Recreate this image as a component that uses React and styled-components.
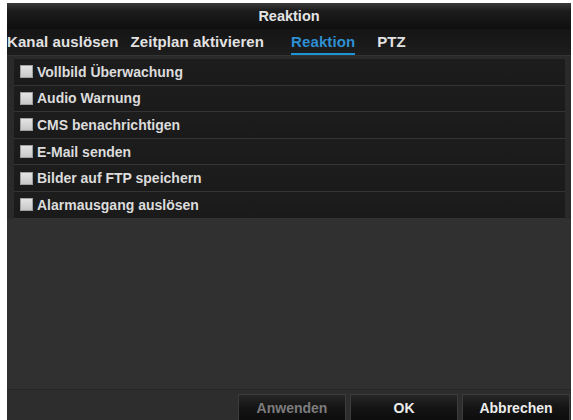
import React from 'react';
import styled, { createGlobalStyle } from 'styled-components';

const GlobalStyle = createGlobalStyle`
  html, body {
    margin: 0;
    padding: 0;
    background: #ffffff;
  }
  body {
    font-family: 'Liberation Sans', Arial, sans-serif;
  }
`;

const tabs = ['Kanal auslösen', 'Zeitplan aktivieren', 'Reaktion', 'PTZ'];

const actions = [
  'Vollbild Überwachung',
  'Audio Warnung',
  'CMS benachrichtigen',
  'E-Mail senden',
  'Bilder auf FTP speichern',
  'Alarmausgang auslösen',
];

const App = () => {
  return (
    <Frame>
      <GlobalStyle />
      <Panel>
        <TitleBar>Reaktion</TitleBar>
        <TabBar>
          {tabs.map((tab) => (
            <Tab key={tab} active={tab === 'Reaktion'}>
              {tab}
            </Tab>
          ))}
        </TabBar>
        <Content>
          <List>
            {actions.map((label) => (
              <Row key={label}>
                <Check />
                <span>{label}</span>
              </Row>
            ))}
          </List>
          <Filler />
        </Content>
        <Footer>
          <Button disabled>Anwenden</Button>
          <Button>OK</Button>
          <Button>Abbrechen</Button>
        </Footer>
      </Panel>
    </Frame>
  );
};

const Frame = styled.div`
  box-sizing: border-box;
  width: 573px;
  height: 420px;
  padding: 3px 2px 0 7px;
  overflow: hidden;
`;

const Panel = styled.div`
  display: flex;
  flex-direction: column;
  height: 100%;
  background-color: #2c2c2c;
`;

const TitleBar = styled.div`
  height: 26px;
  display: flex;
  align-items: center;
  justify-content: center;
  background: linear-gradient(to bottom, #3a3a3a 0%, #1c1c1c 30%, #0f0f0f 100%);
  color: #e4e4e4;
  font-size: 14.5px;
  font-weight: bold;
`;

const TabBar = styled.div`
  height: 26px;
  display: flex;
  align-items: center;
  gap: 12px;
  background: linear-gradient(to bottom, #151515 0%, #1d1d1d 100%);
  border-bottom: 1px solid #333333;
`;

const Tab = styled.div`
  position: relative;
  top: 1px;
  font-size: 15px;
  font-weight: bold;
  line-height: 22px;
  letter-spacing: 0.1px;
  color: ${(props) => (props.active ? '#2e8fd2' : '#e2e2e2')};
  border-bottom: 2px solid ${(props) => (props.active ? '#1a96d8' : 'transparent')};
  margin-left: ${(props) => (props.active ? '15px' : '0')};
  margin-right: ${(props) => (props.active ? '10px' : '0')};
`;

const Content = styled.div`
  flex: 1;
  display: flex;
  flex-direction: column;
  padding: 3px 6px 0 7px;
  background-color: #2a2a2a;
`;

const List = styled.div`
  display: flex;
  flex-direction: column;
`;

const Row = styled.div`
  height: 25.6px;
  display: flex;
  align-items: center;
  gap: 4px;
  padding-left: 6px;
  background: linear-gradient(to bottom, #1d1d1d 0%, #1a1a1a 100%);
  border-bottom: 1px solid #343434;
  color: #dcdcdc;
  font-size: 14px;
  font-weight: bold;
`;

const Check = styled.div`
  width: 13px;
  height: 13px;
  background: linear-gradient(to bottom, #e4e4e4 0%, #c8c8c8 100%);
  border: 1px solid #a0a0a0;
  box-sizing: border-box;
`;

const Filler = styled.div`
  flex: 1;
  background-color: #303030;
  margin: 0 -6px 0 -7px;
`;

const Footer = styled.div`
  height: 31px;
  display: flex;
  align-items: flex-start;
  justify-content: flex-end;
  gap: 4px;
  padding: 4px 1px 0 0;
  box-sizing: border-box;
  background-color: #2d2d2d;
  border-top: 1px solid #252525;
`;

const Button = styled.div`
  width: 108px;
  height: 28px;
  display: flex;
  align-items: center;
  justify-content: center;
  box-sizing: border-box;
  background: linear-gradient(to bottom, #262626 0%, #141414 50%, #0c0c0c 100%);
  border: 1px solid #3c3c3c;
  color: ${(props) => (props.disabled ? '#7c7c7c' : '#ececec')};
  font-size: 14px;
  font-weight: bold;
`;

export default App;
